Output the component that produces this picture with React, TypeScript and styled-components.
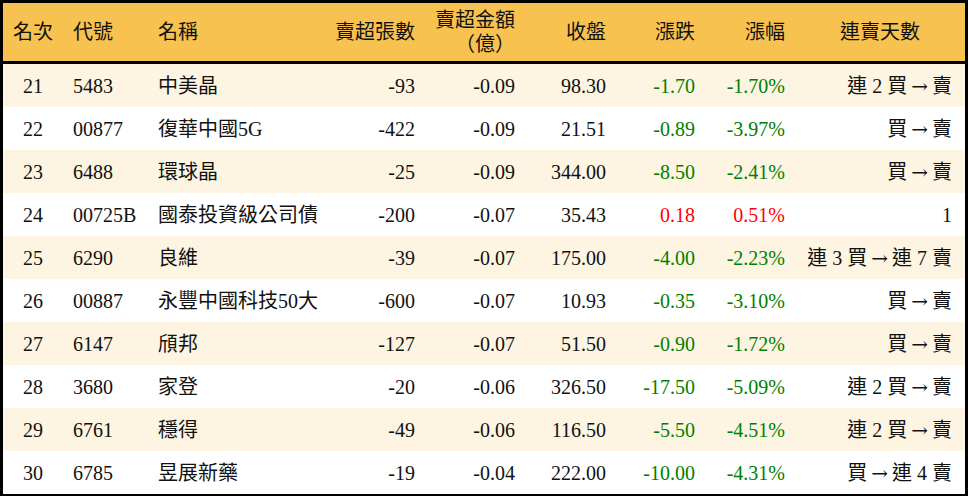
import React from 'react'
import styled, { createGlobalStyle } from 'styled-components'

const GlobalStyle = createGlobalStyle`
  html, body {
    margin: 0;
    padding: 0;
    background: #ffffff;
  }
  body {
    font-family: "Liberation Serif", "Noto Sans CJK TC", serif;
  }
`

type Row = {
  rank: number
  code: string
  name: string
  lots: string
  amount: string
  close: string
  change: string
  pct: string
  streak: string
}

const rows: Row[] = [
  { rank: 21, code: '5483', name: '中美晶', lots: '-93', amount: '-0.09', close: '98.30', change: '-1.70', pct: '-1.70%', streak: '連 2 買 → 賣' },
  { rank: 22, code: '00877', name: '復華中國5G', lots: '-422', amount: '-0.09', close: '21.51', change: '-0.89', pct: '-3.97%', streak: '買 → 賣' },
  { rank: 23, code: '6488', name: '環球晶', lots: '-25', amount: '-0.09', close: '344.00', change: '-8.50', pct: '-2.41%', streak: '買 → 賣' },
  { rank: 24, code: '00725B', name: '國泰投資級公司債', lots: '-200', amount: '-0.07', close: '35.43', change: '0.18', pct: '0.51%', streak: '1' },
  { rank: 25, code: '6290', name: '良維', lots: '-39', amount: '-0.07', close: '175.00', change: '-4.00', pct: '-2.23%', streak: '連 3 買 → 連 7 賣' },
  { rank: 26, code: '00887', name: '永豐中國科技50大', lots: '-600', amount: '-0.07', close: '10.93', change: '-0.35', pct: '-3.10%', streak: '買 → 賣' },
  { rank: 27, code: '6147', name: '頎邦', lots: '-127', amount: '-0.07', close: '51.50', change: '-0.90', pct: '-1.72%', streak: '買 → 賣' },
  { rank: 28, code: '3680', name: '家登', lots: '-20', amount: '-0.06', close: '326.50', change: '-17.50', pct: '-5.09%', streak: '連 2 買 → 賣' },
  { rank: 29, code: '6761', name: '穩得', lots: '-49', amount: '-0.06', close: '116.50', change: '-5.50', pct: '-4.51%', streak: '連 2 買 → 賣' },
  { rank: 30, code: '6785', name: '昱展新藥', lots: '-19', amount: '-0.04', close: '222.00', change: '-10.00', pct: '-4.31%', streak: '買 → 連 4 賣' },
]

const widths = [60, 85, 182, 95, 100, 91, 89, 90, 170]

const Table = styled.table`
  width: 968px;
  table-layout: fixed;
  border-collapse: separate;
  border-spacing: 0;
  border: 3px solid #000;
  font-size: 20px;
  color: #111;
`

const Head = styled.th<{ $align: 'left' | 'right' | 'center'; $pad?: number }>`
  height: 58px;
  padding: 0;
  padding-left: ${p => (p.$align === 'left' ? 10 : 0)}px;
  padding-right: ${p => (p.$align === 'right' ? p.$pad ?? 10 : 0)}px;
  background: #f8c250;
  border-bottom: 3px solid #000;
  text-align: ${p => p.$align};
  font-weight: normal;
  line-height: 24px;
  vertical-align: middle;
  white-space: nowrap;
`

const BodyRow = styled.tr<{ $odd: boolean }>`
  background: ${p => (p.$odd ? '#fdf5e2' : '#ffffff')};
`

const Cell = styled.td<{ $align: 'left' | 'right' | 'center'; $tone?: 'up' | 'down'; $pad?: number }>`
  height: 43px;
  padding: 0;
  padding-left: ${p => (p.$align === 'left' ? 10 : 0)}px;
  padding-right: ${p => (p.$align === 'right' ? p.$pad ?? 10 : 0)}px;
  text-align: ${p => p.$align};
  color: ${p => (p.$tone === 'up' ? '#ff0000' : p.$tone === 'down' ? '#008000' : '#111')};
  line-height: 24px;
  vertical-align: middle;
  white-space: nowrap;
`

// long thin arrow between buy / sell streaks
const Arrow = styled.span`
  font-family: "DejaVu Serif", serif;
  font-size: 20px;
  margin: 0 -1px;
`

function Streak({ text }: { text: string }) {
  const parts = text.split('→')
  return (
    <>
      {parts.map((p, i) => (
        <React.Fragment key={i}>
          {i > 0 && <Arrow>→</Arrow>}
          {p}
        </React.Fragment>
      ))}
    </>
  )
}

export default function App() {
  return (
    <>
      <GlobalStyle />
      <Table>
        <colgroup>
          {widths.map((w, i) => (
            <col key={i} style={{ width: w }} />
          ))}
        </colgroup>
        <thead>
          <tr>
            <Head $align="center">名次</Head>
            <Head $align="left">代號</Head>
            <Head $align="left">名稱</Head>
            <Head $align="right">賣超張數</Head>
            <Head $align="right">
              賣超金額
              <br />
              （億）
            </Head>
            <Head $align="right">收盤</Head>
            <Head $align="right">漲跌</Head>
            <Head $align="right">漲幅</Head>
            <Head $align="center">連賣天數</Head>
          </tr>
        </thead>
        <tbody>
          {rows.map((r, i) => {
            const tone = r.change.startsWith('-') ? 'down' : 'up'
            return (
              <BodyRow key={r.rank} $odd={i % 2 === 0}>
                <Cell $align="center">{r.rank}</Cell>
                <Cell $align="left">{r.code}</Cell>
                <Cell $align="left">{r.name}</Cell>
                <Cell $align="right">{r.lots}</Cell>
                <Cell $align="right">{r.amount}</Cell>
                <Cell $align="right">{r.close}</Cell>
                <Cell $align="right" $tone={tone}>{r.change}</Cell>
                <Cell $align="right" $tone={tone}>{r.pct}</Cell>
                <Cell $align="right" $pad={13}>
                  <Streak text={r.streak} />
                </Cell>
              </BodyRow>
            )
          })}
        </tbody>
      </Table>
    </>
  )
}
